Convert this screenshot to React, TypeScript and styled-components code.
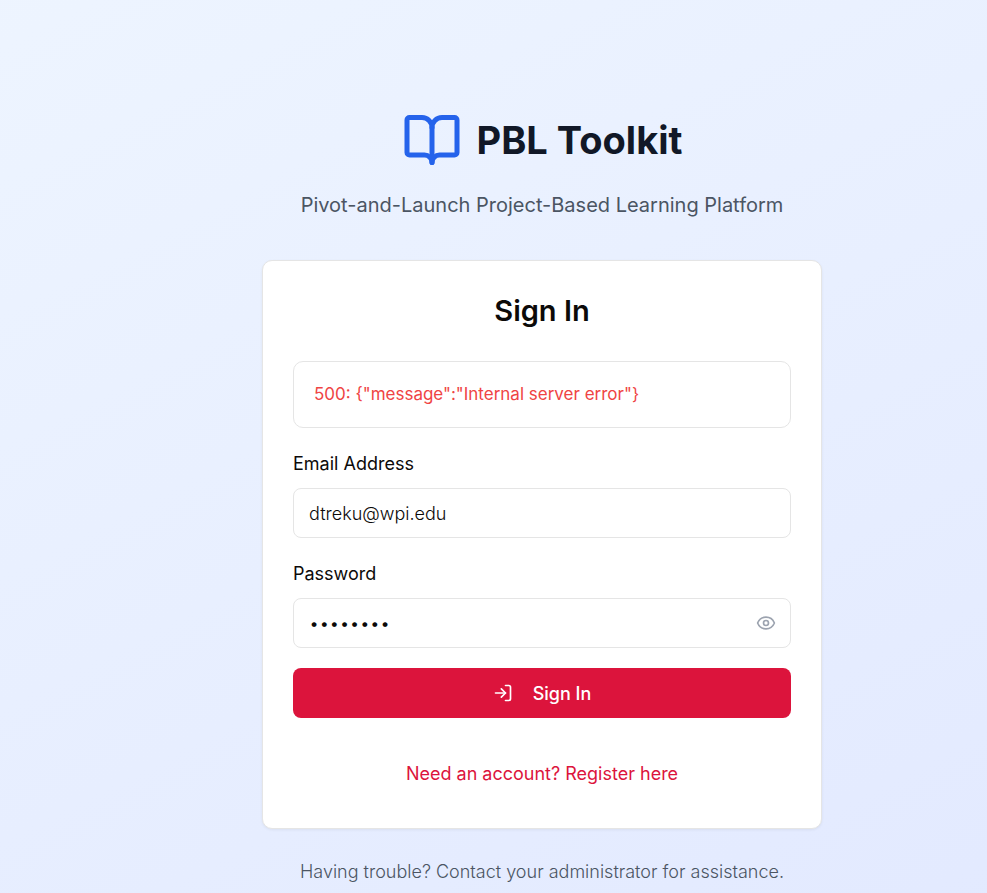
import React, { useState } from "react";
import styled, { createGlobalStyle } from "styled-components";
import { BookOpen, Eye, EyeOff, LogIn } from "lucide-react";

const GlobalStyle = createGlobalStyle`
  *, *::before, *::after { box-sizing: border-box; }
  body {
    margin: 0;
    font-family: Inter, "Liberation Sans", sans-serif;
    font-size: 18px;
    font-weight: 400;
    line-height: 25px;
    color: #0c0a09;
  }
  h1, h2, p { margin: 0; }
  button, input { font: inherit; }
`;

const Page = styled.main`
  display: flex;
  flex-direction: column;
  align-items: center;
  min-height: 100vh;
  padding: 110px 0 9px 97px;
  background: linear-gradient(to bottom right, #eff6ff, #e0e7ff) 45% 0 / 195% 111% no-repeat;
`;

const Column = styled.div`
  width: 100%;
  max-width: 560px;
`;

const Header = styled.header`
  text-align: center;
  margin-bottom: 40px;
`;

const Brand = styled.div`
  display: flex;
  align-items: center;
  justify-content: center;
  gap: 15px;
  margin-bottom: 20px;
  color: #2563eb;
`;

const BrandName = styled.h1`
  font-size: 38px;
  line-height: 45px;
  font-weight: 700;
  color: #111827;
`;

const Tagline = styled.p`
  font-size: 20px;
  line-height: 30px;
  color: #4b5563;
`;

const Card = styled.section`
  padding: 30px;
  background: #fff;
  border: 1px solid #e5e5e5;
  border-radius: 10px;
  box-shadow: 0 1px 3px rgba(0, 0, 0, 0.06);
`;

const CardTitle = styled.h2`
  margin-bottom: 30px;
  font-size: 29px;
  line-height: 40px;
  font-weight: 600;
  text-align: center;
`;

const Form = styled.form`
  display: flex;
  flex-direction: column;
  gap: 20px;
`;

const Alert = styled.div`
  padding: 20px;
  border: 1px solid #e5e5e5;
  border-radius: 10px;
  font-size: 17px;
  color: #ef4444;
`;

const Field = styled.div`
  display: flex;
  flex-direction: column;
  gap: 8px;
`;

const Label = styled.label`
  line-height: 32px;
`;

const InputRow = styled.div`
  position: relative;
  display: flex;
`;

const Input = styled.input<{ $trailing?: boolean }>`
  width: 100%;
  height: 50px;
  padding: 0 ${(p) => (p.$trailing ? 50 : 15)}px 0 15px;
  border: 1px solid #e5e5e5;
  border-radius: 8px;
  background: #fff;
  color: inherit;
  font-weight: 300;
  outline-color: #dc143c;
`;

const RevealButton = styled.button`
  position: absolute;
  top: 0;
  right: 0;
  height: 100%;
  padding: 0 15px;
  display: flex;
  align-items: center;
  border: 0;
  background: none;
  color: #9ca3af;
  cursor: pointer;
`;

const SubmitButton = styled.button`
  display: flex;
  align-items: center;
  justify-content: center;
  gap: 20px;
  height: 50px;
  border: 0;
  border-radius: 8px;
  background: #dc143c;
  color: #fff;
  font-weight: 500;
  cursor: pointer;
`;

const RegisterRow = styled.div`
  display: flex;
  justify-content: center;
  margin-top: 32px;
`;

const RegisterLink = styled.a`
  line-height: 48px;
  color: #dc143c;
  text-decoration: none;
`;

const Help = styled.p`
  margin-top: 30px;
  font-weight: 300;
  text-align: center;
  color: #4b5563;
`;

export default function App() {
  const [email, setEmail] = useState("dtreku@wpi.edu");
  const [password, setPassword] = useState("password");
  const [visible, setVisible] = useState(false);

  return (
    <>
      <GlobalStyle />
      <Page>
        <Column>
          <Header>
            <Brand>
              <BookOpen size={60} aria-hidden />
              <BrandName>PBL Toolkit</BrandName>
            </Brand>
            <Tagline>Pivot-and-Launch Project-Based Learning Platform</Tagline>
          </Header>

          <Card>
            <CardTitle>Sign In</CardTitle>
            <Form onSubmit={(e) => e.preventDefault()}>
              <Alert role="alert">{'500: {"message":"Internal server error"}'}</Alert>
              <Field>
                <Label htmlFor="email">Email Address</Label>
                <Input id="email" type="email" value={email} onChange={(e) => setEmail(e.target.value)} />
              </Field>
              <Field>
                <Label htmlFor="password">Password</Label>
                <InputRow>
                  <Input
                    id="password"
                    type={visible ? "text" : "password"}
                    $trailing
                    value={password}
                    onChange={(e) => setPassword(e.target.value)}
                  />
                  <RevealButton
                    type="button"
                    aria-label={visible ? "Hide password" : "Show password"}
                    onClick={() => setVisible(!visible)}
                  >
                    {visible ? <EyeOff size={20} /> : <Eye size={20} />}
                  </RevealButton>
                </InputRow>
              </Field>
              <SubmitButton type="submit">
                <LogIn size={20} aria-hidden />
                Sign In
              </SubmitButton>
            </Form>
            <RegisterRow>
              <RegisterLink href="#register">Need an account? Register here</RegisterLink>
            </RegisterRow>
          </Card>

          <Help>Having trouble? Contact your administrator for assistance.</Help>
        </Column>
      </Page>
    </>
  );
}
